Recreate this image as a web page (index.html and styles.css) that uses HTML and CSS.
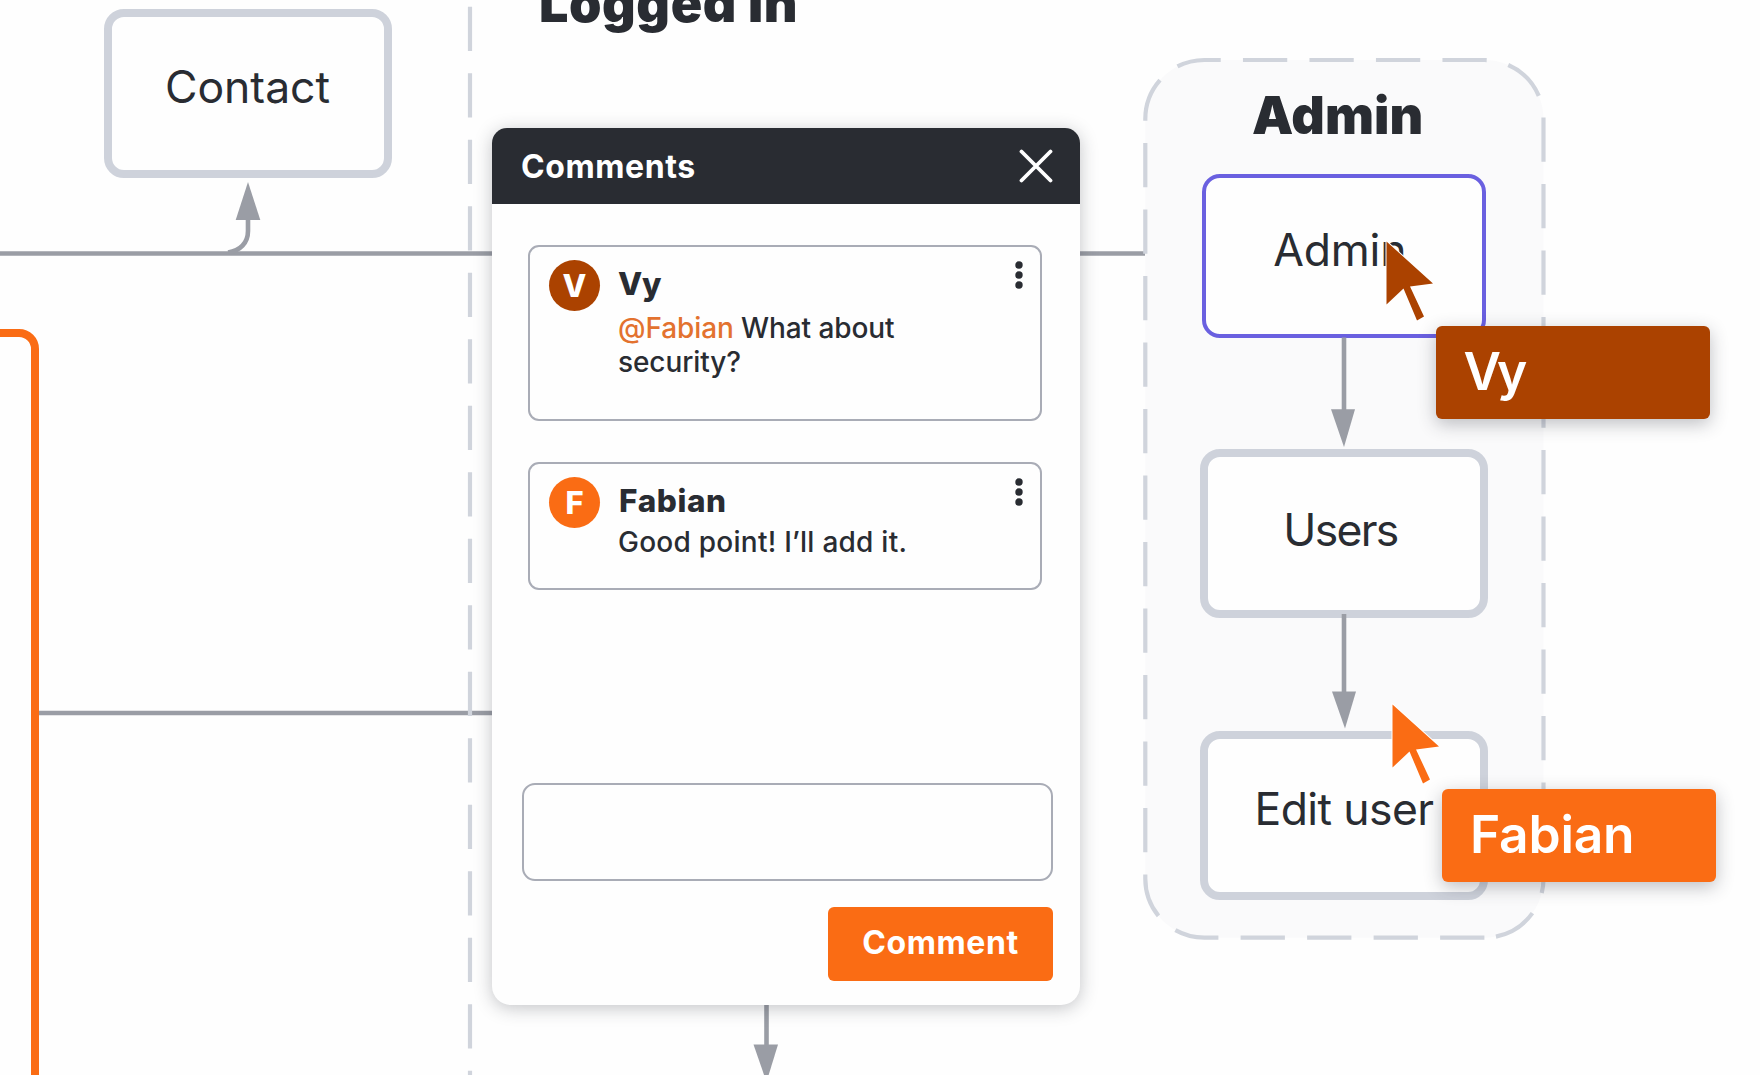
FILE: index.html
```html
<!DOCTYPE html>
<html lang="en">
<head>
<meta charset="utf-8">
<title>Sitemap diagram</title>
<link rel="stylesheet" href="styles.css">
</head>
<body>
<main class="canvas">
  <svg class="wires" viewBox="0 0 1760 1075" aria-hidden="true">
    <g class="wire">
      <path d="M0 253.5H1145"/>
      <path d="M228 252.5C240 251 248 243 248 231V218"/>
      <path d="M36 713H600"/>
    </g>
    <path class="head" d="M248 182L260.300 220H235.700Z"/>
    <path class="lane" d="M470 6.700V1075"/>
    <path class="group" d="M1484.400 937.700H1204.300A59 59 0 0 1 1145.300 878.700V119A59 59 0 0 1 1204.300 60H1484.500A59 59 0 0 1 1543.500 119V878.700A59 59 0 0 1 1484.500 937.700"/>
  </svg>

  <section class="node node-plain contact">Contact</section>
  <section class="node node-orange"></section>
  <h2 class="title logged">Logged In</h2>
  <h2 class="title admin-title">Admin</h2>
  <section class="node node-selected">Admin</section>
  <section class="node node-plain users">Users</section>
  <section class="node node-plain edit">Edit user</section>

  <svg class="wires" viewBox="0 0 1760 1075" aria-hidden="true">
    <g class="wire">
      <path d="M1344 337.500V412"/>
      <path d="M1344 614V694"/>
      <path d="M766.500 1000V1048"/>
    </g>
    <path class="head" d="M1331 409.300H1355L1344 447Z"/>
    <path class="head" d="M1332 691.500H1356L1345 728.500Z"/>
    <path class="head" d="M753.500 1044.500H778L766.500 1082Z"/>
  </svg>

  <aside class="panel">
    <header class="panel-head">
      <h1 class="panel-title">Comments</h1>
      <svg class="close" viewBox="0 0 34 34"><path d="M2.500 2.500L31.500 31.500M31.500 2.500L2.500 31.500"/></svg>
    </header>
    <div class="thread">
      <article class="card card-vy">
        <div class="avatar avatar-vy">V</div>
        <div class="msg">
          <h3 class="name">Vy</h3>
          <p class="text"><span class="mention">@Fabian</span> What about<br>security?</p>
        </div>
        <svg class="more" viewBox="0 0 8 28"><circle cx="4" cy="4" r="3.700"/><circle cx="4" cy="14" r="3.700"/><circle cx="4" cy="24" r="3.700"/></svg>
      </article>
      <article class="card card-fabian">
        <div class="avatar avatar-fabian">F</div>
        <div class="msg">
          <h3 class="name name-fabian">Fabian</h3>
          <p class="text text-fabian">Good point! I’ll add it.</p>
        </div>
        <svg class="more" viewBox="0 0 8 28"><circle cx="4" cy="4" r="3.700"/><circle cx="4" cy="14" r="3.700"/><circle cx="4" cy="24" r="3.700"/></svg>
      </article>
    </div>
    <form class="composer">
      <textarea class="field" aria-label="Comment"></textarea>
      <button class="send" type="button">Comment</button>
    </form>
  </aside>

  <div class="user user-vy">
    <svg class="pointer" viewBox="0 0 54 86"><path d="M3.500 3.500L50 45.500L27 48.500L41 78.500L34 82.500L20.500 50.500L3.500 66.500Z"/></svg>
    <span class="tag">Vy</span>
  </div>
  <div class="user user-fabian">
    <svg class="pointer" viewBox="0 0 54 86"><path d="M3.500 3.500L50 45.500L27 48.500L41 78.500L34 82.500L20.500 50.500L3.500 66.500Z"/></svg>
    <span class="tag">Fabian</span>
  </div>
</main>
</body>
</html>
```
FILE: styles.css
```css
* { box-sizing: border-box; }
body {
  margin: 0;
  background: #fefefe;
  color: #292c32;
  font-family: Inter, "Liberation Sans", sans-serif;
}
h1, h2, h3, p { margin: 0; }

.canvas {
  position: relative;
  width: 1760px;
  height: 1075px;
  overflow: hidden;
}
.wires {
  position: absolute;
  inset: 0;
  width: 1760px;
  height: 1075px;
}
.wire { fill: none; stroke: #9a9da5; stroke-width: 4.600px; }
.head { fill: #9a9da5; }
.lane, .group {
  fill: none;
  stroke: #d0d4dc;
  stroke-width: 4.200px;
  stroke-dasharray: 44.300 22.200;
}
.group { fill: #fafafb; }

/* Diagram nodes */
.node {
  position: absolute;
  display: flex;
  align-items: center;
  justify-content: center;
  background: #fefefe;
  border-radius: 20px;
  font-size: 44.500px;
  font-weight: 400;
  line-height: 54px;
  white-space: nowrap;
}
.node-plain {
  width: 288px;
  height: 169px;
  border: 8.500px solid #ced2db;
  padding-bottom: 13px;
}
.contact { left: 104px; top: 9px; padding-right: 1px; }
.users { left: 1200px; top: 449px; padding: 0 7px 8px 0; letter-spacing: -1.700px; }
.edit { left: 1200px; top: 730.500px; padding-bottom: 13px; letter-spacing: -.600px; }
.node-selected {
  left: 1202px;
  top: 173.500px;
  width: 283.500px;
  height: 164px;
  border: 4.500px solid #6a60e0;
  border-radius: 18px;
  padding: 0 8px 11px 0;
  letter-spacing: -.200px;
}
.node-orange {
  left: -260px;
  top: 328.500px;
  width: 299px;
  height: 900px;
  border: 8.500px solid #fa6c14;
}

.title {
  position: absolute;
  font-size: 52px;
  font-weight: 900;
  line-height: 60px;
  white-space: nowrap;
}
.logged { left: 539px; top: -26px; letter-spacing: .600px; }
.admin-title { left: 1252px; top: 86px; letter-spacing: .100px; }

/* Comments panel */
.panel {
  position: absolute;
  left: 492px;
  top: 128px;
  width: 588px;
  height: 877px;
  display: flex;
  flex-direction: column;
  background: #fefefe;
  border-radius: 16px 16px 19px 19px;
  box-shadow: 0 3px 18px rgba(40, 44, 55, .28);
}
.panel-head {
  display: flex;
  align-items: center;
  justify-content: space-between;
  height: 75.500px;
  padding: 0 27px 0 29px;
  background: #292c32;
  border-radius: 15px 15px 0 0;
  color: #fff;
}
.panel-title {
  padding-top: 2px;
  font-size: 32px;
  font-weight: 700;
  line-height: 38px;
  letter-spacing: .600px;
}
.close {
  width: 34px;
  height: 34px;
  fill: none;
  stroke: #fff;
  stroke-width: 3.800px;
  stroke-linecap: round;
}
.thread {
  flex: 1;
  display: flex;
  flex-direction: column;
  gap: 41px;
  padding: 41.500px 38px 0 36px;
}
.card {
  display: flex;
  align-items: flex-start;
  padding: 13px 17px 0 19px;
  border: 2px solid #a9acb6;
  border-radius: 11px;
}
.card-vy { height: 176px; }
.card-fabian { height: 128px; }
.avatar {
  display: flex;
  align-items: center;
  justify-content: center;
  width: 51px;
  height: 51px;
  border-radius: 50%;
  color: #fff;
  font-size: 31px;
  font-weight: 800;
}
.avatar-vy { background: #ab4200; }
.avatar-fabian { background: #fa6c14; }
.msg { flex: 1; padding-left: 18px; }
.name {
  margin-bottom: 3px;
  font-size: 31.500px;
  font-weight: 800;
  line-height: 48px;
  letter-spacing: -.300px;
}
.name-fabian { margin-bottom: 0; padding-left: 1px; letter-spacing: .600px; }
.text {
  font-size: 28px;
  font-weight: 500;
  line-height: 34px;
  letter-spacing: -.100px;
  white-space: nowrap;
}
.text-fabian { letter-spacing: .250px; }
.mention { color: #e3722f; }
.more { width: 8px; height: 28px; fill: #292c32; margin-top: 1px; }

.composer {
  display: flex;
  flex-direction: column;
  align-items: flex-end;
  gap: 26px;
  padding: 0 27px 24px 30px;
}
.field {
  display: block;
  width: 100%;
  height: 98px;
  border: 2px solid #a9acb6;
  border-radius: 13px;
  background: #fefefe;
  resize: none;
}
.send {
  width: 225px;
  height: 74.500px;
  padding: 0 0 2px;
  border: 0;
  border-radius: 6px;
  background: #fa6c14;
  color: #fff;
  font: 700 32px/38px Inter, "Liberation Sans", sans-serif;
  letter-spacing: .600px;
}

/* Live collaborators */
.user { position: absolute; width: 330px; height: 184px; }
.user-vy { left: 1382.500px; top: 238px; --tint: #ab4200; }
.user-fabian { left: 1389px; top: 701px; --tint: #fa6c14; }
.pointer {
  position: absolute;
  left: 0;
  top: 0;
  width: 54px;
  height: 86px;
  fill: var(--tint);
  stroke: #fff;
  stroke-width: 2px;
  paint-order: stroke;
}
.tag {
  position: absolute;
  left: 53px;
  top: 87.500px;
  width: 274px;
  height: 93.500px;
  padding-left: 28px;
  border-radius: 6px;
  background: var(--tint);
  box-shadow: 0 5px 18px rgba(40, 44, 55, .3);
  color: #fff;
  font-size: 51.500px;
  font-weight: 600;
  line-height: 90px;
  letter-spacing: -.200px;
  white-space: nowrap;
}
.user-vy .tag { letter-spacing: -4px; }
```
